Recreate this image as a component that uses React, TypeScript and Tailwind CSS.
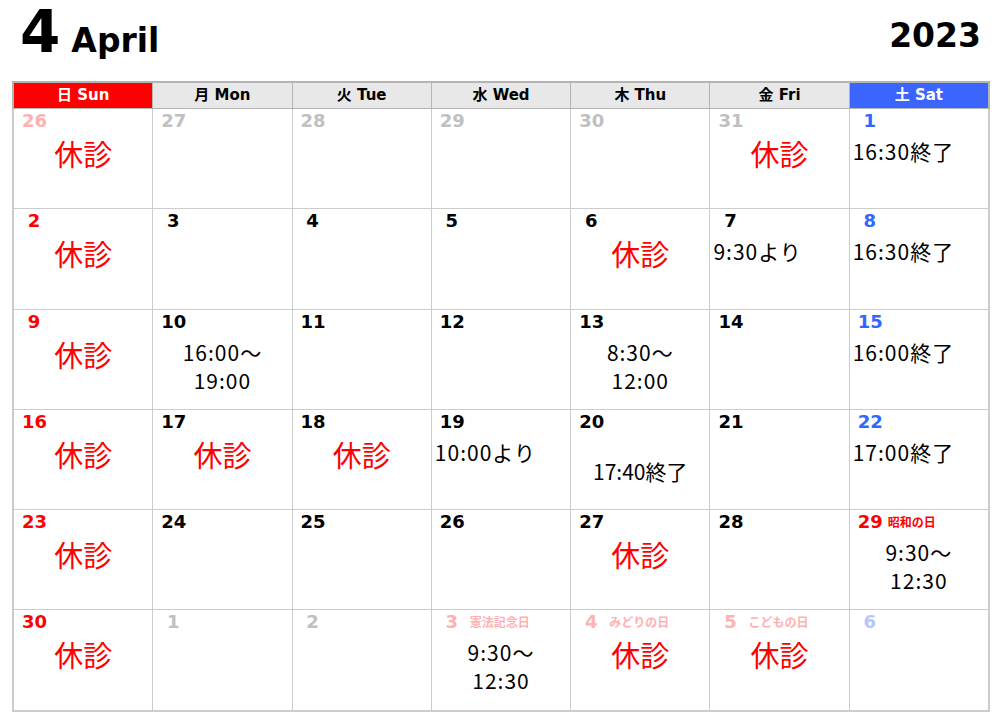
import type { ReactNode } from 'react'

type Cell = {
  n: number
  nc: string
  label?: string
  lc?: string
  kind?: 'closed' | 'left' | 'center' | 'low'
  text?: string[]
}

const RED = 'text-[#ff0000]'
const BLUE = 'text-[#3366ff]'
const BLACK = 'text-black'
const GRAY = 'text-[#c0c0c0]'
const PINK = 'text-[#ffb0b0]'
const LBLUE = 'text-[#b4c6ff]'

const weeks: Cell[][] = [
  [
    { n: 26, nc: PINK, kind: 'closed' },
    { n: 27, nc: GRAY },
    { n: 28, nc: GRAY },
    { n: 29, nc: GRAY },
    { n: 30, nc: GRAY },
    { n: 31, nc: GRAY, kind: 'closed' },
    { n: 1, nc: BLUE, kind: 'left', text: ['16:30終了'] },
  ],
  [
    { n: 2, nc: RED, kind: 'closed' },
    { n: 3, nc: BLACK },
    { n: 4, nc: BLACK },
    { n: 5, nc: BLACK },
    { n: 6, nc: BLACK, kind: 'closed' },
    { n: 7, nc: BLACK, kind: 'left', text: ['9:30より'] },
    { n: 8, nc: BLUE, kind: 'left', text: ['16:30終了'] },
  ],
  [
    { n: 9, nc: RED, kind: 'closed' },
    { n: 10, nc: BLACK, kind: 'center', text: ['16:00〜', '19:00'] },
    { n: 11, nc: BLACK },
    { n: 12, nc: BLACK },
    { n: 13, nc: BLACK, kind: 'center', text: ['8:30〜', '12:00'] },
    { n: 14, nc: BLACK },
    { n: 15, nc: BLUE, kind: 'left', text: ['16:00終了'] },
  ],
  [
    { n: 16, nc: RED, kind: 'closed' },
    { n: 17, nc: BLACK, kind: 'closed' },
    { n: 18, nc: BLACK, kind: 'closed' },
    { n: 19, nc: BLACK, kind: 'left', text: ['10:00より'] },
    { n: 20, nc: BLACK, kind: 'low', text: ['17:40終了'] },
    { n: 21, nc: BLACK },
    { n: 22, nc: BLUE, kind: 'left', text: ['17:00終了'] },
  ],
  [
    { n: 23, nc: RED, kind: 'closed' },
    { n: 24, nc: BLACK },
    { n: 25, nc: BLACK },
    { n: 26, nc: BLACK },
    { n: 27, nc: BLACK, kind: 'closed' },
    { n: 28, nc: BLACK },
    { n: 29, nc: RED, label: '昭和の日', lc: RED, kind: 'center', text: ['9:30〜', '12:30'] },
  ],
  [
    { n: 30, nc: RED, kind: 'closed' },
    { n: 1, nc: GRAY },
    { n: 2, nc: GRAY },
    { n: 3, nc: PINK, label: '憲法記念日', lc: PINK, kind: 'center', text: ['9:30〜', '12:30'] },
    { n: 4, nc: PINK, label: 'みどりの日', lc: PINK, kind: 'closed' },
    { n: 5, nc: PINK, label: 'こどもの日', lc: PINK, kind: 'closed' },
    { n: 6, nc: LBLUE },
  ],
]

const heads = [
  { t: '日 Sun', c: 'bg-[#ff0000] text-white' },
  { t: '月 Mon', c: 'bg-[#e8e8e8] text-black' },
  { t: '火 Tue', c: 'bg-[#e8e8e8] text-black' },
  { t: '水 Wed', c: 'bg-[#e8e8e8] text-black' },
  { t: '木 Thu', c: 'bg-[#e8e8e8] text-black' },
  { t: '金 Fri', c: 'bg-[#e8e8e8] text-black' },
  { t: '土 Sat', c: 'bg-[#3a66ff] text-white' },
]

const latin = { fontFamily: '"DejaVu Sans", "Noto Sans CJK JP", sans-serif' }
const jp = { fontFamily: '"Noto Sans CJK JP", sans-serif' }

function Body({ cell }: { cell: Cell }): ReactNode {
  if (cell.kind === 'closed')
    return (
      <div className="mt-[7px] text-center text-[29px] leading-none text-[#ff0000]" style={jp}>
        休診
      </div>
    )
  if (cell.kind === 'left')
    return (
      <div className="mt-[9px] pl-[3px] text-[21px] leading-none tracking-[1px] text-black" style={jp}>
        {cell.text![0]}
      </div>
    )
  if (cell.kind === 'center')
    return (
      <div className="mt-[5px] text-center text-[21px] leading-[28px] tracking-[1px] text-black" style={jp}>
        {cell.text!.map((l) => (
          <div key={l}>{l}</div>
        ))}
      </div>
    )
  if (cell.kind === 'low')
    return (
      <div className="mt-[28px] text-center text-[21px] leading-none text-black" style={jp}>
        {cell.text![0]}
      </div>
    )
  return null
}

export default function App() {
  return (
    <div className="w-[1005px] h-[720px] bg-white">
      <div className="flex h-[81px] items-start justify-between pl-[20px] pr-[24px]" style={latin}>
        <div className="flex items-baseline gap-[11px] font-bold">
          <span className="text-[58px] leading-[64px]">4</span>
          <span className="text-[33px] leading-[40px]">April</span>
        </div>
        <span className="mt-[16px] text-[33px] font-bold leading-[40px]">2023</span>
      </div>

      <div className="ml-[12px] w-[978px]">
        <div className="grid grid-cols-7 gap-px border-2 border-b border-[#b4b4b4] bg-[#b4b4b4]">
          {heads.map((h) => (
            <div key={h.t} className={`flex h-[25px] items-center justify-center text-[15px] font-bold ${h.c}`} style={latin}>
              {h.t}
            </div>
          ))}
        </div>
        <div className="grid grid-cols-7 gap-px border-2 border-t-0 border-[#cccccc] bg-[#cccccc]">
          {weeks.flat().map((c, i) => (
            <div key={i} className="h-[99.3px] bg-white">
              <div className="flex items-center pt-[1px]">
                <span className={`ml-[8px] w-[24px] text-center text-[18px] font-bold leading-[22px] ${c.nc}`} style={latin}>
                  {c.n}
                </span>
                {c.label && (
                  <span className={`ml-[6px] text-[12px] font-bold ${c.lc}`} style={jp}>
                    {c.label}
                  </span>
                )}
              </div>
              <Body cell={c} />
            </div>
          ))}
        </div>
      </div>
    </div>
  )
}
